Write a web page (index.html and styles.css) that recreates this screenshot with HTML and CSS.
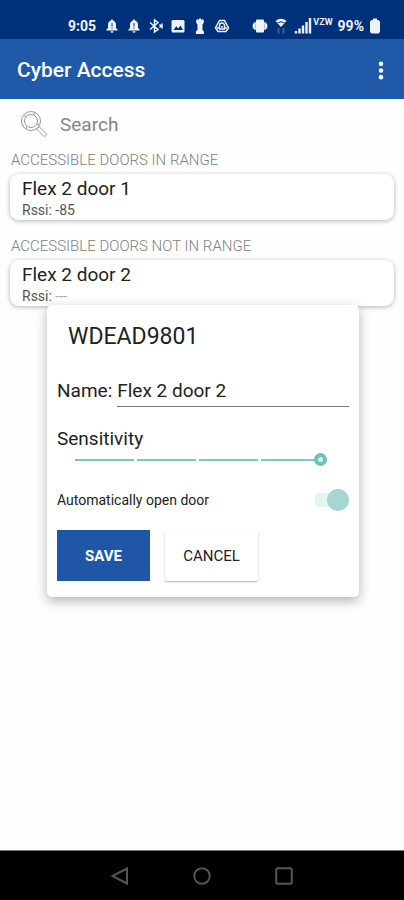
FILE: index.html
```html
<!DOCTYPE html>
<html lang="en">
<head>
<meta charset="utf-8">
<meta name="viewport" content="width=device-width, initial-scale=1">
<title>Cyber Access</title>
<link rel="stylesheet" href="styles.css">
</head>
<body>
<div class="status">
  <span class="status-text">9:05</span>
  <div class="status-group notifications">
    <svg class="icon" viewBox="0 0 16 16"><path fill="currentColor" d="M8 1.500c.8 0 1.200.5 1.200 1.200 1.900.5 2.800 2 2.800 4v3.300l1.700 1.800v.7H2.300v-.7L4 10V6.700c0-2 .9-3.500 2.800-4C6.800 2 7.200 1.500 8 1.500zM6.500 13.200h3a1.500 1.500 0 0 1-3 0z"/><path class="cut" d="M8 5v3.500M8 9.500v1.200"/></svg>
    <svg class="icon" viewBox="0 0 16 16"><path fill="currentColor" d="M8 1.500c.8 0 1.200.5 1.200 1.200 1.900.5 2.800 2 2.800 4v3.300l1.700 1.800v.7H2.300v-.7L4 10V6.700c0-2 .9-3.500 2.800-4C6.800 2 7.200 1.500 8 1.500zM6.500 13.200h3a1.500 1.500 0 0 1-3 0z"/><path class="cut" d="M8 5v3.500M8 9.500v1.200"/></svg>
    <svg class="icon" viewBox="0 0 16 16"><path class="line" d="M2 4.500l8 7L6.500 14V2L10 4.500l-8 7M11.500 6.500L13 8l-1.500 1.500M14 5.500v5"/></svg>
    <svg class="icon" viewBox="0 0 16 16"><rect x="1.500" y="2" width="13" height="12.500" rx="1.500" fill="currentColor"/><path fill="#00307a" d="M3.500 12l2.800-3.800 1.900 2.300 2.300-3 2.500 4.500z"/></svg>
    <svg class="icon" viewBox="0 0 16 16"><path fill="currentColor" d="M8 0l1.500 1.500h1.800c1 1.500 1 3.500-.8 5v5.500l1.400 1.500V16h-8v-2.500L5.500 12V6.500c-1.800-1.500-1.800-3.500-.8-5h1.800z"/></svg>
    <svg class="icon" viewBox="0 0 16 16"><path class="line" d="M5.500 2.500h5l4 7.500-2.500 3.500H4L1.500 10zM5.500 11V7.500a2.500 2.500 0 0 1 5 0V11zM3 10h2.500M10.500 10H13M8 8v2"/></svg>
  </div>
  <div class="status-group system">
    <svg class="icon" viewBox="0 0 16 16"><rect x="4" y="1.500" width="8" height="13" rx="1" fill="currentColor"/><path class="line" d="M3 4v8M13 4v8M1.500 5.500v5M14.500 5.500v5"/></svg>
    <svg class="icon" viewBox="0 0 16 16"><path fill="currentColor" d="M2.500 3q5.500-4.500 11 0L8 9z"/><path class="arc" d="M4.500 5Q8 2.500 11.500 5"/><path class="dim" d="M5.500 10V15.500M10.500 10V15.500"/></svg>
    <svg class="icon signal" viewBox="0 0 18 16"><path class="bar" d="M2 15.500v-2.500M5.500 15.500v-5M9 15.500V7.500M12.500 15.500V4M16 15.500V0"/></svg>
    <span class="carrier">VZW</span>
    <span class="status-text">99%</span>
    <svg class="icon battery" viewBox="0 0 12 16"><path fill="currentColor" d="M4 .5h4V2h1.500l1.500 1.500V14l-1.500 1.500h-7L1 14V3.500L2.500 2H4z"/></svg>
  </div>
</div>
<header class="appbar">
  <h1>Cyber Access</h1>
  <button class="more" type="button" aria-label="More options"><svg viewBox="0 0 6 20"><circle cx="3" cy="3" r="2.400"/><circle cx="3" cy="10" r="2.400"/><circle cx="3" cy="17" r="2.400"/></svg></button>
</header>
<main>
  <label class="search">
    <svg viewBox="0 0 28 28"><circle cx="11" cy="11" r="9.500"/><circle cx="11" cy="11" r="6.500"/><path d="M3.500 5.500l3 1M14.500 2.500l-.5 2.500M19.500 14.500l-3-.5M6 19l1-3M16.500 19l2.500-2.500 7 7q1 1-.2 2.200t-2.300.3z"/></svg>
    <input type="search" placeholder="Search" aria-label="Search">
  </label>
  <section>
    <h2>ACCESSIBLE DOORS IN RANGE</h2>
    <article class="card"><h3>Flex 2 door 1</h3><p>Rssi: -85</p></article>
  </section>
  <section>
    <h2>ACCESSIBLE DOORS NOT IN RANGE</h2>
    <article class="card"><h3>Flex 2 door 2</h3><p>Rssi: <span class="faint">---</span></p></article>
  </section>
  <form class="dialog" role="dialog" aria-labelledby="device">
    <h2 id="device">WDEAD9801</h2>
    <div class="field">
      <label for="name">Name:</label>
      <input id="name" type="text" value="Flex 2 door 2">
    </div>
    <label class="sens-label" for="sens">Sensitivity</label>
    <input id="sens" class="slider" type="range" min="0" max="4" value="4">
    <div class="auto">
      <label for="auto">Automatically open door</label>
      <input id="auto" class="switch" type="checkbox" checked>
    </div>
    <div class="actions">
      <button class="save" type="button">SAVE</button>
      <button class="cancel" type="button">CANCEL</button>
    </div>
  </form>
</main>
<nav class="navbar">
  <button type="button" aria-label="Back"><svg viewBox="0 0 20 20"><path d="M17 2.500v15L2.500 10z"/></svg></button>
  <button type="button" aria-label="Home"><svg viewBox="0 0 20 20"><circle cx="10" cy="10" r="7.800"/></svg></button>
  <button type="button" aria-label="Recent apps"><svg viewBox="0 0 20 20"><rect x="2.200" y="2.200" width="15.600" height="15.600" rx="1.500"/></svg></button>
</nav>
</body>
</html>
```
FILE: styles.css
```css
* { box-sizing: border-box; }
body {
  margin: 0;
  min-height: 100vh;
  display: flex;
  flex-direction: column;
  background: #fefefe;
  color: #222;
  font-family: Roboto, "Liberation Sans", sans-serif;
}
h1, h2, h3, p { margin: 0; font-weight: 400; }
button, input { font: inherit; color: inherit; border: 0; padding: 0; margin: 0; background: none; }

.status {
  height: 39px;
  padding: 13px 23px 0 68px;
  display: flex;
  align-items: center;
  background: #00307a;
  color: #eef3fb;
}
.status-text { font-size: 14px; line-height: 16px; font-weight: 700; }
.status-group { display: flex; align-items: center; }
.notifications { gap: 6px; margin: 0 auto 0 8px; }
.system { gap: 5px; }
.icon { width: 16px; height: 16px; flex: none; }
.icon .line { fill: none; stroke: currentColor; stroke-width: 1.500; }
.icon .cut { stroke: #00307a; stroke-width: 1; }
.icon .arc { fill: none; stroke: #00307a; stroke-width: 1; }
.icon .dim { stroke: #2f63a5; stroke-width: 2; }
.icon .bar { stroke: currentColor; stroke-width: 2.400; }
.icon.signal { width: 18px; }
.icon.battery { width: 12px; }
.carrier { font-size: 9px; line-height: 9px; font-weight: 700; align-self: flex-start; margin-left: -4px; }

.appbar {
  height: 60px;
  padding: 2px 20px 0 17px;
  display: flex;
  justify-content: space-between;
  align-items: center;
  background: #2059a7;
  color: #fff;
}
.appbar h1 { font-size: 21px; line-height: 28px; font-weight: 500; }
.more svg { display: block; width: 6px; height: 19px; fill: #fff; }

main { flex: 1; position: relative; }
.search { display: flex; align-items: center; gap: 12px; height: 50px; padding: 0 20px; }
.search svg { width: 28px; height: 28px; fill: none; stroke: #999; stroke-width: 1; }
.search input { flex: 1; min-width: 0; height: 28px; font-size: 19px; outline: 0; }
.search input::placeholder { color: #858585; opacity: 1; }
section { padding: 0 10px; margin-bottom: 18px; }
section h2 { font-size: 15px; line-height: 16px; font-weight: 300; margin: 3px 0 6px 1px; color: #808080; }
.card {
  height: 46px;
  padding: 3px 12px;
  border-radius: 9px;
  background: #fff;
  box-shadow: 0 1px 5px rgba(0, 0, 0, .3);
}
.card h3 { font-size: 19px; line-height: 23px; }
.card p { font-size: 14px; line-height: 20px; color: #555; }
.faint { color: #aaa; }

.dialog {
  position: absolute;
  top: 206px;
  left: 47px;
  right: 45px;
  padding: 18px 10px 16px;
  border-radius: 5px;
  background: #fff;
  box-shadow: 0 4px 12px rgba(0, 0, 0, .3);
}
.dialog h2 { font-size: 23px; line-height: 28px; padding-left: 11px; }
.field { display: flex; align-items: flex-end; gap: 5px; margin-top: 24px; font-size: 19px; }
.field label { line-height: 32px; }
.field input { flex: 1; min-width: 0; height: 32px; border-bottom: 1px solid #777; outline: 0; }
.sens-label { display: block; margin-top: 19px; font-size: 19px; line-height: 26px; }
.slider {
  appearance: none;
  display: block;
  width: calc(100% - 40px);
  height: 14px;
  margin: 1px 22px 0 18px;
}
.slider::-webkit-slider-runnable-track {
  height: 14px;
  background:
    linear-gradient(90deg, #fff 3px, transparent 3px) 59px 0 / 62px 100%,
    linear-gradient(#7dc7bd, #7dc7bd) 0 50% / 100% 2px no-repeat;
}
.slider::-webkit-slider-thumb {
  appearance: none;
  width: 13px;
  height: 13px;
  border: 4px solid #6fc2b6;
  border-radius: 50%;
  background: #d8f0ec;
}
.auto { display: flex; justify-content: space-between; align-items: center; height: 24px; margin-top: 21px; }
.auto label { font-size: 14px; line-height: 20px; }
.switch {
  appearance: none;
  display: flex;
  align-items: center;
  justify-content: flex-end;
  width: 34px;
  height: 22px;
  background: linear-gradient(#e2f5f2, #e2f5f2) 0 50% / 24px 14px no-repeat;
  border-radius: 8px;
}
.switch::before { content: ""; width: 22px; height: 22px; border-radius: 50%; background: #a5d6d1; }
.actions { display: flex; gap: 15px; margin-top: 18px; }
.actions button { width: 93px; height: 51px; font-size: 15px; }
.actions .save { background: #1f57a6; color: #fff; font-weight: 700; }
.actions .cancel { border-radius: 2px; background: #fff; box-shadow: 0 1px 2px rgba(0, 0, 0, .3); }

.navbar {
  height: 50px;
  display: flex;
  justify-content: center;
  align-items: center;
  gap: 62px;
  background: #000;
  border-top: 1px solid #777;
}
.navbar svg { display: block; width: 20px; height: 20px; fill: none; stroke: #555; stroke-width: 2; }
```
